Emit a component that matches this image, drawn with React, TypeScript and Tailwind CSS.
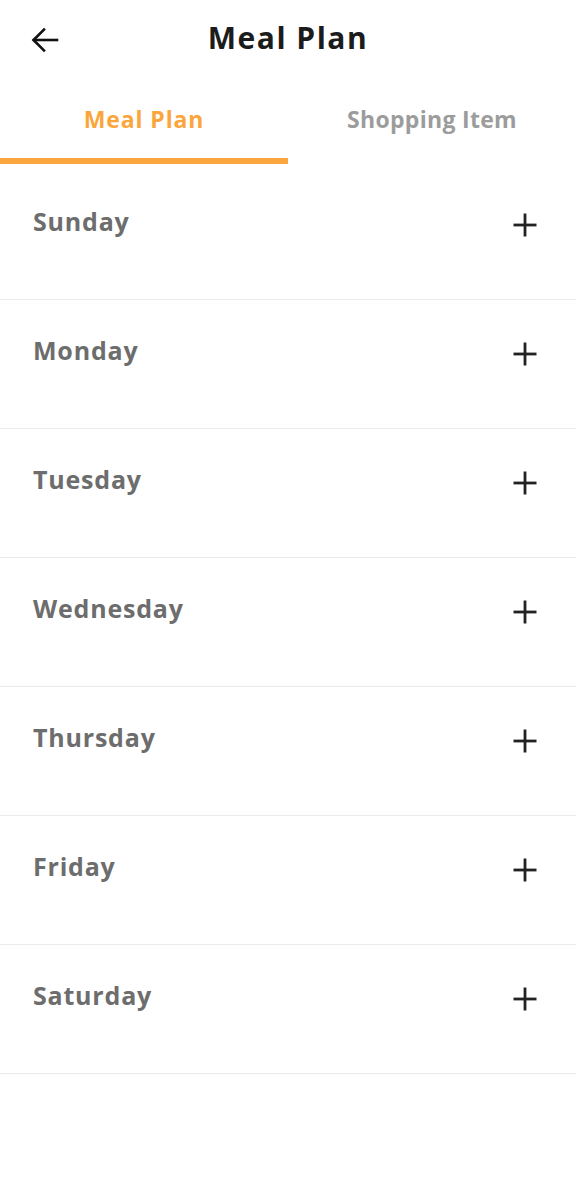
import React from 'react';

const DAYS = ['Sunday', 'Monday', 'Tuesday', 'Wednesday', 'Thursday', 'Friday', 'Saturday'];

const FONT = { fontFamily: '"Open Sans", Lato, sans-serif' };

const BackArrow = () => (
    <svg width="28" height="26" viewBox="0 0 28 26" fill="none" stroke="#111" strokeWidth="2.6" strokeLinecap="square">
        <path d="M3 13h23" />
        <path d="M13 2.5L2.5 13 13 23.5" />
    </svg>
);

const Plus = () => (
    <svg width="24" height="24" viewBox="0 0 24 24" fill="none" stroke="#222" strokeWidth="2.8">
        <path d="M12 0.5v23" />
        <path d="M0.5 12h23" />
    </svg>
);

export default function App() {
    return (
        <div className="w-[576px] min-h-[1192px] bg-white" style={FONT}>
            <header className="relative h-[76px] flex items-center justify-center">
                <button className="absolute left-[31px] top-[27px]">
                    <BackArrow />
                </button>
                <h1 className="text-[30px] font-bold text-[#1c1c1c] leading-none tracking-[1.5px]">Meal Plan</h1>
            </header>

            <div className="flex h-[88px]">
                <div className="flex-1 flex flex-col">
                    <div className="flex-1 flex items-center justify-center pt-[4px]">
                        <span className="text-[23px] font-bold text-[#fba63d] leading-none tracking-[0.9px]">Meal Plan</span>
                    </div>
                    <div className="h-[6px] bg-[#fba63d]" />
                </div>
                <div className="flex-1 flex flex-col">
                    <div className="flex-1 flex items-center justify-center pt-[4px]">
                        <span className="text-[23px] font-bold text-[#9c9c9c] leading-none tracking-[0.3px]">Shopping Item</span>
                    </div>
                    <div className="h-[6px]" />
                </div>
            </div>

            <div className="pt-[7px]">
                {DAYS.map(day => (
                    <div key={day} className="h-[129px] border-b border-[#ebebeb] pt-[36px] pl-[33px] pr-[39px]">
                        <div className="flex items-center justify-between h-[30px]">
                            <span className="text-[25px] font-bold text-[#6d6d6d] tracking-[0.8px]">{day}</span>
                            <span className="pt-[5px]">
                                <Plus />
                            </span>
                        </div>
                    </div>
                ))}
            </div>
        </div>
    );
}
